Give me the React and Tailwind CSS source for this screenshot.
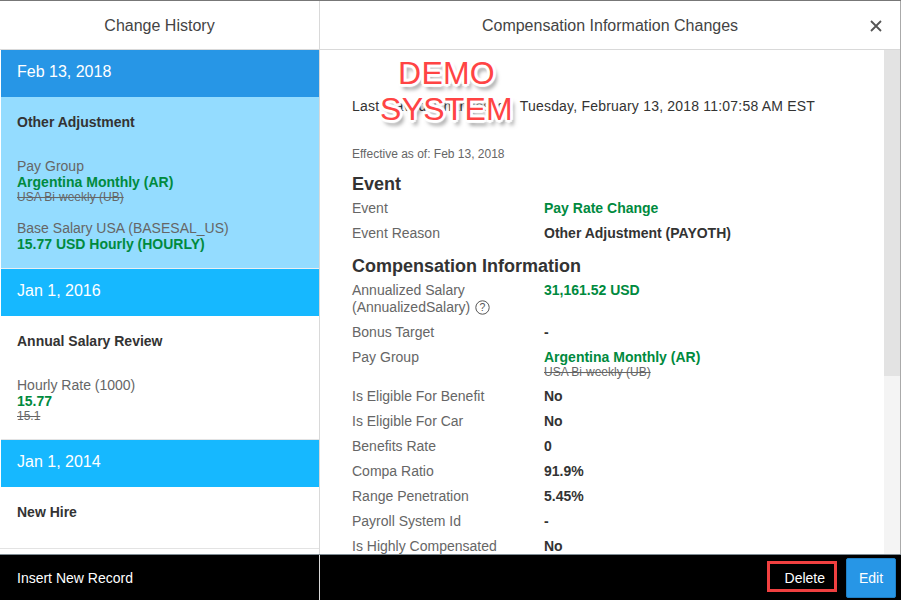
const font = { fontFamily: '"Liberation Sans", Arial, sans-serif' };

function Old({ children }) {
  return <div className="text-[12px] leading-[14px] text-[#666] line-through">{children}</div>;
}
function New({ children }) {
  return <div className="text-[14px] leading-[16px] font-bold text-[#008a3e]">{children}</div>;
}
function DateBar({ children, active }) {
  return (
    <div className={`h-[47px] shrink-0 flex items-center pl-4 pb-[4px] text-[16px] text-white ${active ? "bg-[#2796e6]" : "bg-[#16b8ff]"}`}>
      {children}
    </div>
  );
}
function Row({ label, children, h = "h-[25px]" }) {
  return (
    <div className={`flex ${h} text-[14px] leading-[17px]`}>
      <div className="w-[192px] shrink-0 text-[#666]">{label}</div>
      <div className="font-bold text-[#333]">{children}</div>
    </div>
  );
}
function Heading({ children }) {
  return <div className="text-[18px] leading-[21px] font-bold text-[#333]">{children}</div>;
}

export default function App() {
  return (
    <div style={font} className="w-[901px] h-[600px] overflow-hidden bg-white flex flex-col relative">
      <div className="h-px bg-[#777] shrink-0" />
      <div className="flex flex-1 min-h-0">
        <div className="w-[320px] shrink-0 border-r border-[#d9d9d9] flex flex-col pl-px">
          <div className="h-[47px] shrink-0 -ml-px border-b border-[#d9d9d9] box-content flex items-center justify-center pt-[1px] text-[16px] text-[#444]">
            Change History
          </div>
          <DateBar active>Feb 13, 2018</DateBar>
          <div className="h-[172px] shrink-0 bg-[#94dcff] border-b border-[#e8eef2] pl-4 pt-[17px]">
            <div className="text-[14px] leading-[16px] font-bold text-[#333]">Other Adjustment</div>
            <div className="mt-[28px] text-[14px] leading-[16px] text-[#666]">Pay Group</div>
            <New>Argentina Monthly (AR)</New>
            <Old>USA Bi-weekly (UB)</Old>
            <div className="mt-[16px] text-[14px] leading-[16px] text-[#666]">Base Salary USA (BASESAL_US)</div>
            <New>15.77 USD Hourly (HOURLY)</New>
          </div>
          <DateBar>Jan 1, 2016</DateBar>
          <div className="h-[124px] shrink-0 pl-4 pt-[17px] border-b border-[#e3e3e3]">
            <div className="text-[14px] leading-[16px] font-bold text-[#333]">Annual Salary Review</div>
            <div className="mt-[28px] text-[14px] leading-[16px] text-[#666]">Hourly Rate (1000)</div>
            <New>15.77</New>
            <Old>15.1</Old>
          </div>
          <DateBar>Jan 1, 2014</DateBar>
          <div className="h-[62px] shrink-0 -ml-px pl-[17px] pt-[17px] border-b border-[#e3e3e3]">
            <div className="text-[14px] leading-[16px] font-bold text-[#333]">New Hire</div>
          </div>
        </div>
        <div className="flex-1 min-w-0 flex flex-col border-r border-[#aaaaaa]">
          <div className="h-[47px] shrink-0 box-content border-b border-[#d9d9d9] flex items-center justify-center pt-[1px] relative text-[16px] text-[#444]">
            <span>Compensation Information Changes</span>
            <svg className="absolute right-[18px] top-[19px]" width="12" height="12" viewBox="0 0 12 12">
              <path d="M1 1L11 11M11 1L1 11" stroke="#555" strokeWidth="1.8" />
            </svg>
          </div>
          <div className="flex flex-1 min-h-0">
            <div className="w-[564px] shrink-0 overflow-hidden pl-8 pt-[48px] relative">
              <div className="text-[14px] leading-[16px] tracking-[0.2px] text-[#333] whitespace-nowrap">
                <span className="[word-spacing:2.5px]">Last Saved Changes on </span>Tuesday, February 13, 2018 11:07:58 AM EST
              </div>
              <div className="mt-[33px] text-[12px] leading-[14px] text-[#666]">Effective as of: Feb 13, 2018</div>
              <div className="mt-[13px] mb-[5px]"><Heading>Event</Heading></div>
              <Row label="Event"><span className="text-[#008a3e]">Pay Rate Change</span></Row>
              <Row label="Event Reason" h="h-[31px]">Other Adjustment (PAYOTH)</Row>
              <div className="mb-[5px]"><Heading>Compensation Information</Heading></div>
              <Row
                h="h-[42px]"
                label={
                  <>
                    Annualized Salary
                    <br />
                    <span className="inline-flex items-center gap-[5px]">
                      (AnnualizedSalary)
                      <svg width="15" height="15" viewBox="0 0 15 15" fill="none">
                        <circle cx="7.5" cy="7.5" r="6.7" stroke="#555" strokeWidth="1" />
                        <text x="7.5" y="11.2" textAnchor="middle" fontSize="10.5" fill="#555" fontFamily="Liberation Sans">?</text>
                      </svg>
                    </span>
                  </>
                }
              >
                <span className="text-[#008a3e]">31,161.52 USD</span>
              </Row>
              <Row label="Bonus Target">-</Row>
              <Row label="Pay Group" h="h-[39px]">
                <New>Argentina Monthly (AR)</New>
                <div className="font-normal"><Old>USA Bi-weekly (UB)</Old></div>
              </Row>
              <Row label="Is Eligible For Benefit">No</Row>
              <Row label="Is Eligible For Car">No</Row>
              <Row label="Benefits Rate">0</Row>
              <Row label="Compa Ratio">91.9%</Row>
              <Row label="Range Penetration">5.45%</Row>
              <Row label="Payroll System Id">-</Row>
              <Row label="Is Highly Compensated">No</Row>
            </div>
            <div className="flex-1 bg-[#f4f4f4] flex flex-col">
              <div className="h-[326px] bg-[#e3e3e3]" />
            </div>
          </div>
        </div>
      </div>
      <div className="h-[46px] shrink-0 bg-black border-t border-[#7f8c94] flex items-center text-[14px] text-white">
        <div className="w-[320px] h-full border-r border-[#d9d9d9] flex items-center pl-[17px] pt-[1px] shrink-0">Insert New Record</div>
        <div className="flex-1 h-full flex justify-end items-start pr-[5px] gap-[9px]">
          <div className="w-[70px] h-[31px] mt-[6px] border-[3px] border-[#f04040] flex items-center justify-end pr-[9px] pt-[3px] box-border">Delete</div>
          <div className="w-[50px] h-[40px] mt-[3px] bg-[#2796e6] border border-[#1f7fc4] rounded-[2px] flex items-center justify-center">Edit</div>
        </div>
      </div>
      <div
        className="absolute left-[380px] top-[55px] w-[133px] text-center text-[32px] leading-[36px] tracking-[0.2px] text-[#ff4444] pointer-events-none"
        style={{ textShadow: "0 0 3px #fff, 0 0 3px #fff, 3px 0 1px #fff, -3px 0 1px #fff, 0 3px 1px #fff, 0 -3px 1px #fff, 2px 2px 1px #fff, -2px -2px 1px #fff, 2px -2px 1px #fff, -2px 2px 1px #fff, 3px 5px 4px #0008" }}
      >
        DEMO
        <br />
        SYSTEM
      </div>
    </div>
  );
}
